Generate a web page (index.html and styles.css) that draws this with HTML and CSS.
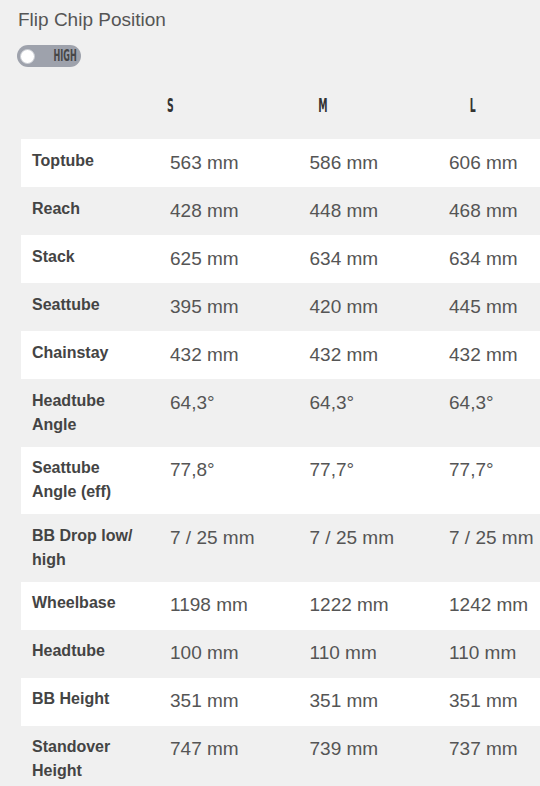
FILE: index.html
```html
<!DOCTYPE html>
<html lang="en">
<head>
<meta charset="utf-8">
<title>Geometry</title>
<link rel="stylesheet" href="styles.css">
</head>
<body>
<div class="page">
  <h2 class="title">Flip Chip Position</h2>
  <div class="toggle">
    <span class="knob"></span>
    <span class="toggle-label"><span class="cond">HIGH</span></span>
  </div>
  <div class="sizes">
    <span class="size s1"><span class="cond">S</span></span>
    <span class="size s2"><span class="cond">M</span></span>
    <span class="size s3"><span class="cond">L</span></span>
  </div>
  <div class="table">
    <div class="row light"><div class="lbl">Toptube</div><div class="val">563 mm</div><div class="val">586 mm</div><div class="val">606 mm</div></div>
    <div class="row"><div class="lbl">Reach</div><div class="val">428 mm</div><div class="val">448 mm</div><div class="val">468 mm</div></div>
    <div class="row light"><div class="lbl">Stack</div><div class="val">625 mm</div><div class="val">634 mm</div><div class="val">634 mm</div></div>
    <div class="row"><div class="lbl">Seattube</div><div class="val">395 mm</div><div class="val">420 mm</div><div class="val">445 mm</div></div>
    <div class="row light"><div class="lbl">Chainstay</div><div class="val">432 mm</div><div class="val">432 mm</div><div class="val">432 mm</div></div>
    <div class="row"><div class="lbl">Headtube Angle</div><div class="val">64,3°</div><div class="val">64,3°</div><div class="val">64,3°</div></div>
    <div class="row light"><div class="lbl">Seattube Angle (eff)</div><div class="val">77,8°</div><div class="val">77,7°</div><div class="val">77,7°</div></div>
    <div class="row"><div class="lbl">BB Drop low/ high</div><div class="val">7 / 25 mm</div><div class="val">7 / 25 mm</div><div class="val">7 / 25 mm</div></div>
    <div class="row light"><div class="lbl">Wheelbase</div><div class="val">1198 mm</div><div class="val">1222 mm</div><div class="val">1242 mm</div></div>
    <div class="row"><div class="lbl">Headtube</div><div class="val">100 mm</div><div class="val">110 mm</div><div class="val">110 mm</div></div>
    <div class="row light"><div class="lbl">BB Height</div><div class="val">351 mm</div><div class="val">351 mm</div><div class="val">351 mm</div></div>
    <div class="row"><div class="lbl">Standover Height</div><div class="val">747 mm</div><div class="val">739 mm</div><div class="val">737 mm</div></div>
  </div>
</div>
</body>
</html>
```
FILE: styles.css
```css
html, body {
  margin: 0;
  padding: 0;
  background: #f0f0f0;
}
body {
  font-family: "Liberation Sans", Arial, sans-serif;
  overflow: hidden;
}
.page {
  padding-top: 8px;
  width: 540px;
  height: 786px;
  overflow: hidden;
}
.title {
  margin: 0 0 0 18px;
  font-size: 19px;
  line-height: 24px;
  font-weight: normal;
  color: #555555;
}
.toggle {
  margin: 13px 0 0 17px;
  width: 64px;
  height: 22px;
  border-radius: 11px;
  background: #9ea2ac;
  display: flex;
  align-items: center;
  justify-content: space-between;
  box-sizing: border-box;
  padding: 0 4px 0 3px;
}
.knob {
  width: 13px;
  height: 13px;
  border-radius: 50%;
  background: #ffffff;
  border: 1px solid #c9ccd2;
  margin-top: 1px;
}
.toggle-label {
  display: flex;
  justify-content: flex-end;
  width: 26px;
  color: #474747;
  font-size: 15px;
  line-height: 15px;
}
.cond {
  display: inline-block;
  font-family: "DejaVu Sans", sans-serif;
  font-stretch: condensed;
  font-weight: bold;
  transform: scaleX(0.6);
}
.toggle-label .cond {
  transform-origin: right center;
  margin-top: 1px;
}
.sizes {
  display: flex;
  height: 72px;
  padding-top: 28px;
  box-sizing: border-box;
  color: #333333;
  font-size: 20px;
  line-height: 20px;
}
.size {
  display: flex;
  justify-content: center;
}
.size .cond {
  transform: scaleX(0.52);
}
.s1 { margin-left: 150px; width: 41px; }
.s2 { margin-left: 111px; width: 41px; }
.s3 { margin-left: 109px; width: 41px; }
.table {
  margin-left: 21px;
  width: 580px;
}
.row {
  display: grid;
  grid-template-columns: 138px 139.5px 139.5px 139.5px;
}
.row.light {
  background: #ffffff;
}
.lbl {
  padding: 9.75px 16px 9.75px 11px;
  font-size: 16px;
  line-height: 24px;
  font-weight: bold;
  color: #444444;
}
.val {
  padding: 9.75px 8px 9.75px 11px;
  font-size: 19px;
  line-height: 28.5px;
  color: #555555;
  white-space: nowrap;
}
```
